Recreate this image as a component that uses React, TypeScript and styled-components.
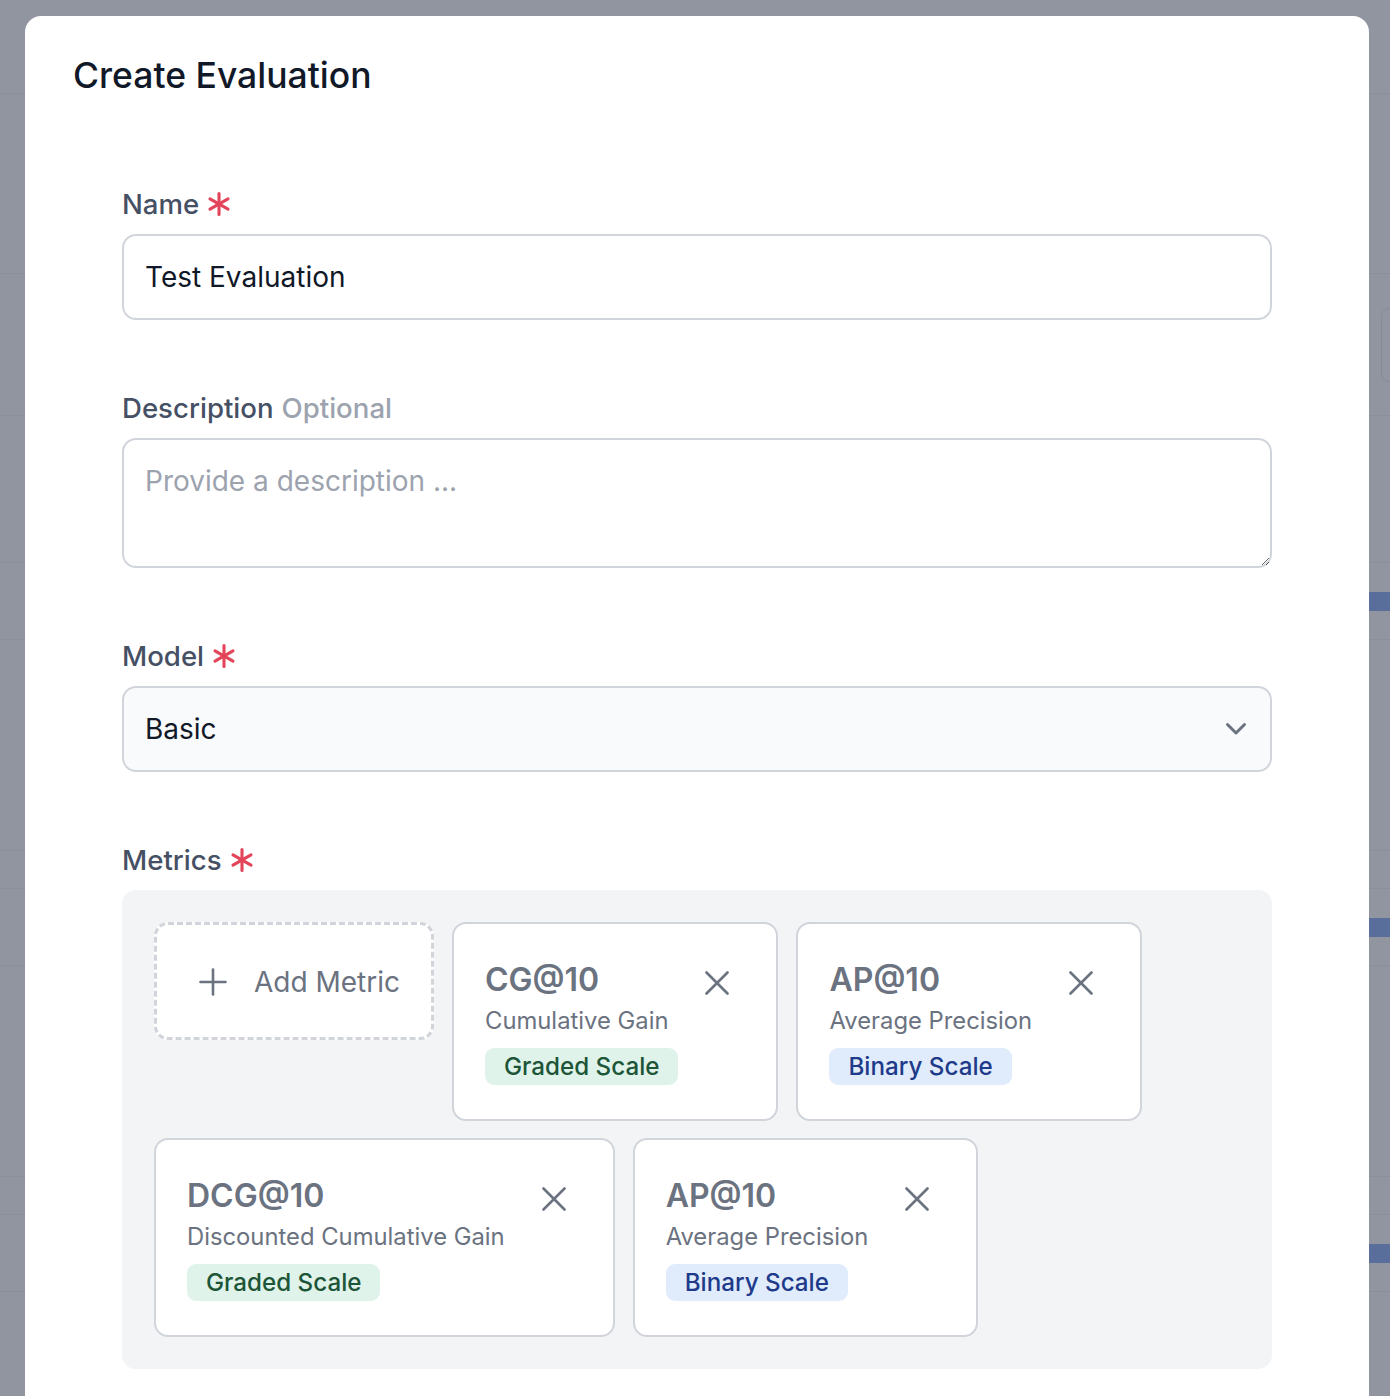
import React from "react";
import styled, { createGlobalStyle } from "styled-components";

const GlobalStyle = createGlobalStyle`
  html, body { margin: 0; padding: 0; height: 1396px; overflow: hidden; background: #ffffff; }
  body { font-family: Inter, "Noto Sans", sans-serif; -webkit-font-smoothing: antialiased; }
  * { box-sizing: border-box; }
`;

const Screen = styled.div`
  position: relative;
  width: 1390px;
  height: 1396px;
  overflow: hidden;
  background: #ffffff;
`;

/* ---------- page behind the dialog ---------- */
const BgPage = styled.div`
  display: flex;
  flex-direction: column;
`;

const BgSection = styled.div<{ $h: number }>`
  height: ${(p) => p.$h}px;
  flex-shrink: 0;
  border-bottom: 1px solid #e5e7eb;
  display: flex;
  align-items: center;
  justify-content: flex-end;
`;

const BgBarRow = styled.div`
  height: 77px;
  flex-shrink: 0;
  border-bottom: 1px solid #e5e7eb;
  display: flex;
  align-items: flex-start;
  justify-content: flex-end;
  padding-top: 29px;
`;

const BgBar = styled.div`
  width: 260px;
  height: 19px;
  background: #2563eb;
`;

const BgButton = styled.div`
  width: 60px;
  height: 74px;
  margin-right: -51px;
  border: 1px solid #d1d5db;
  border-radius: 8px;
  background: #ffffff;
`;

const Backdrop = styled.div`
  position: absolute;
  inset: 0;
  background: rgba(107, 114, 128, 0.75);
`;

/* ---------- dialog ---------- */
const Dialog = styled.div`
  position: absolute;
  top: 16px;
  left: 25px;
  width: 1344px;
  height: 1480px;
  background: #ffffff;
  border-radius: 16px;
  padding: 38px 48px;
  display: flex;
  flex-direction: column;
`;

const DialogTitle = styled.h2`
  margin: 0;
  font-size: 35.5px;
  line-height: 44px;
  font-weight: 500;
  color: #111827;
`;

const Form = styled.form`
  margin-top: 90px;
  padding: 0 49px;
  display: flex;
  flex-direction: column;
  gap: 72px;
`;

const Field = styled.div`
  display: flex;
  flex-direction: column;
  gap: 14px;
`;

const Label = styled.label`
  display: flex;
  align-items: center;
  gap: 8px;
  font-size: 27.6px;
  line-height: 32px;
  font-weight: 450;
  color: #465064;
`;

const OptionalHint = styled.span`
  color: #9ca3af;
`;

const TextInput = styled.input`
  height: 86px;
  width: 100%;
  border: 2px solid #d1d5db;
  border-radius: 14px;
  padding: 0 21px;
  font-family: Inter, "Noto Sans", sans-serif;
  font-size: 28px;
  color: #111827;
  background: #ffffff;
  outline: none;
`;

const TextArea = styled.textarea`
  height: 130px;
  width: 100%;
  border: 2px solid #d1d5db;
  border-radius: 14px;
  padding: 21px;
  font-family: Inter, "Noto Sans", sans-serif;
  font-size: 28px;
  line-height: 40px;
  color: #111827;
  background: #ffffff;
  resize: vertical;
  outline: none;
  &::placeholder { color: #9ca3af; }
`;

const SelectTrigger = styled.div`
  height: 86px;
  width: 100%;
  border: 2px solid #d1d5db;
  border-radius: 14px;
  background: #f9fafb;
  padding: 0 23px 0 21px;
  display: flex;
  align-items: center;
  justify-content: space-between;
  font-size: 28px;
  color: #111827;
`;

const MetricsPanel = styled.div`
  background: #f3f4f6;
  border-radius: 14px;
  padding: 32px;
  display: flex;
  flex-wrap: wrap;
  align-items: flex-start;
  gap: 17px 18px;
`;

const AddMetricCard = styled.button`
  width: 280px;
  height: 118px;
  border: 3px dashed #d1d5db;
  border-radius: 14px;
  background: #ffffff;
  padding: 2px 0 0 42px;
  display: flex;
  align-items: center;
  gap: 27px;
  font-family: Inter, "Noto Sans", sans-serif;
  font-size: 28px;
  font-weight: 400;
  color: #6b7280;
  cursor: pointer;
`;

const MetricCard = styled.div`
  border: 2px solid #d1d5db;
  border-radius: 14px;
  background: #ffffff;
  padding: 36px 47px 34px 31px;
  display: flex;
  flex-direction: column;
`;

const CardHeader = styled.div`
  display: flex;
  align-items: flex-start;
  gap: 37px;
`;

const CardInfo = styled.div`
  display: flex;
  flex-direction: column;
  gap: 4px;
`;

const MetricCode = styled.div`
  font-size: 32px;
  line-height: 40px;
  font-weight: 600;
  color: #6b7280;
`;

const MetricName = styled.div`
  font-size: 23.8px;
  line-height: 34px;
  font-weight: 400;
  color: #6b7280;
  white-space: nowrap;
`;

const RemoveButton = styled.button`
  margin-top: 11px;
  padding: 0;
  border: none;
  background: none;
  color: #6b7280;
  display: flex;
  cursor: pointer;
`;

const BadgeRow = styled.div`
  margin-top: 10px;
  contain: inline-size;
`;

const ScaleBadge = styled.span<{ $tone: "green" | "blue" }>`
  display: inline-flex;
  align-items: center;
  height: 37px;
  padding: 0 19px;
  border-radius: 9px;
  font-size: 24.2px;
  font-weight: 500;
  white-space: nowrap;
  background: ${(p) => (p.$tone === "green" ? "#dff3ea" : "#e0ecfb")};
  color: ${(p) => (p.$tone === "green" ? "#1d5538" : "#1e3a8a")};
`;

const RequiredMark = () => (
  <svg width="24" height="24" viewBox="0 0 24 24" fill="none" stroke="#e3455b" strokeWidth="3.1" strokeLinecap="round">
    <path d="M12 1.6v20.8" />
    <path d="M3 6.8l18 10.4" />
    <path d="M21 6.8L3 17.2" />
  </svg>
);

const XIcon = () => (
  <svg width="24" height="24" viewBox="0 0 24 24" fill="none" stroke="currentColor" strokeWidth="2.6" strokeLinecap="round">
    <path d="M1.5 1.5l21 21" />
    <path d="M22.5 1.5l-21 21" />
  </svg>
);

const PlusIcon = () => (
  <svg width="28" height="28" viewBox="0 0 28 28" fill="none" stroke="currentColor" strokeWidth="2.6" strokeLinecap="round">
    <path d="M14 1.5v25" />
    <path d="M1.5 14h25" />
  </svg>
);

const ChevronIcon = () => (
  <svg width="22" height="14" viewBox="0 0 22 14" fill="none" stroke="#6b7280" strokeWidth="3" strokeLinecap="round" strokeLinejoin="round">
    <path d="M2.5 2.5L11 11l8.5-8.5" />
  </svg>
);

type Metric = { code: string; name: string; scale: string; tone: "green" | "blue" };

const metrics: Metric[] = [
  { code: "CG@10", name: "Cumulative Gain", scale: "Graded Scale", tone: "green" },
  { code: "AP@10", name: "Average Precision", scale: "Binary Scale", tone: "blue" },
  { code: "DCG@10", name: "Discounted Cumulative Gain", scale: "Graded Scale", tone: "green" },
  { code: "AP@10", name: "Average Precision", scale: "Binary Scale", tone: "blue" },
];

export default function App() {
  return (
    <>
      <GlobalStyle />
      <Screen>
        <BgPage>
          <BgSection $h={94} />
          <BgSection $h={180} />
          <BgSection $h={142}>
            <BgButton />
          </BgSection>
          <BgSection $h={147} />
          {[0, 1, 2].map((i) => (
            <React.Fragment key={i}>
              <BgBarRow>
                <BgBar />
              </BgBarRow>
              <BgSection $h={211} />
              <BgSection $h={38} />
            </React.Fragment>
          ))}
        </BgPage>
        <Backdrop />
        <Dialog>
          <DialogTitle>Create Evaluation</DialogTitle>
          <Form onSubmit={(e) => e.preventDefault()}>
            <Field>
              <Label>
                Name <RequiredMark />
              </Label>
              <TextInput defaultValue="Test Evaluation" />
            </Field>
            <Field>
              <Label>
                Description<OptionalHint>Optional</OptionalHint>
              </Label>
              <TextArea placeholder="Provide a description ..." />
            </Field>
            <Field>
              <Label>
                Model <RequiredMark />
              </Label>
              <SelectTrigger>
                <span>Basic</span>
                <ChevronIcon />
              </SelectTrigger>
            </Field>
            <Field>
              <Label>
                Metrics <RequiredMark />
              </Label>
              <MetricsPanel>
                <AddMetricCard type="button">
                  <PlusIcon />
                  <span>Add Metric</span>
                </AddMetricCard>
                {metrics.map((m, i) => (
                  <MetricCard key={i}>
                    <CardHeader>
                      <CardInfo>
                        <MetricCode>{m.code}</MetricCode>
                        <MetricName>{m.name}</MetricName>
                      </CardInfo>
                      <RemoveButton type="button" aria-label="Remove metric">
                        <XIcon />
                      </RemoveButton>
                    </CardHeader>
                    <BadgeRow>
                      <ScaleBadge $tone={m.tone}>{m.scale}</ScaleBadge>
                    </BadgeRow>
                  </MetricCard>
                ))}
              </MetricsPanel>
            </Field>
          </Form>
        </Dialog>
      </Screen>
    </>
  );
}
